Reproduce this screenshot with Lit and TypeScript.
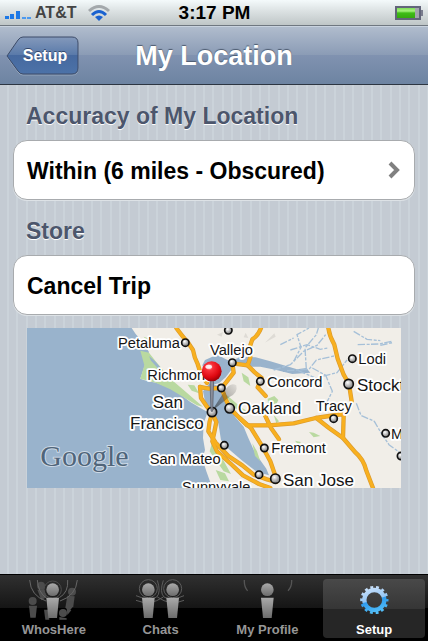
import { LitElement, css, html, svg } from "lit";
import { customElement, property, state } from "lit/decorators.js";
import { classMap } from "lit/directives/class-map.js";

type Place = { name: string; x: number; y: number; big?: boolean; dot?: [number, number] };

// Map units: three per screen pixel.
const PLACES: Place[] = [
  { name: "Petaluma", x: 273, y: 59, dot: [475, 44] },
  { name: "Vallejo", x: 549, y: 80, dot: [616, 104] },
  { name: "Richmond", x: 361, y: 155, dot: [583, 180] },
  { name: "San", x: 377, y: 241, big: true, dot: [555, 252] },
  { name: "Francisco", x: 309, y: 303, big: true },
  { name: "San Mateo", x: 368, y: 407, dot: [592, 352] },
  { name: "Sunnyvale", x: 465, y: 493, dot: [696, 440] },
  { name: "Oakland", x: 633, y: 258, big: true, dot: [608, 241] },
  { name: "Concord", x: 720, y: 176, dot: [700, 160] },
  { name: "Fremont", x: 733, y: 376, dot: [712, 360] },
  { name: "San Jose", x: 768, y: 474, big: true, dot: [745, 452] },
  { name: "Lodi", x: 994, y: 108, dot: [976, 92] },
  { name: "Stockton", x: 990, y: 189, big: true, dot: [965, 168] },
  { name: "Tracy", x: 866, y: 248, dot: [920, 272] },
  { name: "Modesto", x: 1092, y: 332, dot: [1076, 316] },
];

const ROADS = [
  "M448 0 Q470 30 482 42 L498 66 Q502 90 512 108 L522 140 L540 165",
  "M702 0 Q694 22 676 34 Q664 60 670 88 L662 112 L616 106",
  "M660 110 L684 134 L704 150 L692 178 L716 204",
  "M616 106 L620 134 Q600 160 584 180 L596 214 L610 242 L640 272 L672 300 L704 352 L730 400 L748 452",
  "M519 177 L546 182 L584 180",
  "M519 177 L522 210 L540 236 L556 256 L548 280 L544 310 L566 344 L604 384 L646 412 L680 440 L720 454 L748 462",
  "M556 256 L568 282 L562 312 L556 340 L570 370 L612 408 L648 442 L696 468 L730 480",
  "M640 272 L660 292 L726 292 L800 286 L866 270 L948 258 L950 262 L948 330",
  "M714 262 L732 300 L756 334",
  "M868 270 L906 300 L948 330 L984 372 Q1010 394 1018 428 L1038 480",
  "M904 0 Q908 26 922 50 L932 92 L950 140 L966 168 L974 220",
];

const SLOUGHS = [
  "M740 126 L790 110 L830 70 L870 52 L896 20",
  "M780 128 L846 124 L868 96 L930 82",
  "M800 100 L822 58 L810 20 L846 0",
  "M838 124 L834 60 L868 20 L874 0",
  "M856 120 L896 142 L916 190 L900 222",
  "M814 128 L866 150 L930 134 L960 96",
  "M992 50 L1056 48 L1094 40 M1060 52 L1096 44",
  "M760 50 L800 30 M790 66 L840 50 L880 64 L904 60",
  "M988 226 L1002 262 L1042 280 L1064 318 L1086 350 L1116 372",
  "M980 10 L1020 34 L1060 38",
];

@customElement("location-map")
export class LocationMap extends LitElement {
  static styles = css`
    :host { display: block; font-weight: normal; }
    .map { display: block; width: 100%; height: auto; }
    .label, .label-big {
      font-family: "Liberation Sans", Arial, sans-serif;
      fill: #151515; stroke: #fff; stroke-width: 11; stroke-linejoin: round; paint-order: stroke;
    }
    .label { font-size: 44px; }
    .label-big { font-size: 51px; }
    .logo {
      font-family: "Liberation Serif", "Times New Roman", serif; font-size: 90px;
      fill: #50657a; stroke: #ccd9e6; stroke-width: 6; paint-order: stroke;
    }
    .road-edge, .road { fill: none; stroke-linejoin: round; stroke-linecap: round; }
    .road-edge { stroke: #dc9b2e; stroke-width: 13; }
    .road { stroke: #f8b01f; stroke-width: 9; }
    .slough { fill: none; stroke: #a6c0d8; stroke-width: 4; stroke-dasharray: 22 5 9 4; }
    .water { fill: #99b3cc; }
    .park { fill: #b9d9a0; }
  `;

  render() {
    return html`
      <svg class="map" viewBox="0 0 1122 480" role="img" aria-label="Map of the San Francisco Bay Area">
        <defs>
          <radialGradient id="town" cx=".4" cy=".35"><stop offset="0" stop-color="#fff" /><stop offset="1" stop-color="#999" /></radialGradient>
          <radialGradient id="pin" cx=".38" cy=".28" r=".75">
            <stop offset="0" stop-color="#ffc4c4" /><stop offset=".25" stop-color="#f83038" />
            <stop offset=".7" stop-color="#dd0710" /><stop offset="1" stop-color="#960006" />
          </radialGradient>
          <linearGradient id="shade" x1="0" y1="1" x2="1" y2="0"><stop offset="0" stop-color="#222" stop-opacity=".6" /><stop offset="1" stop-color="#222" stop-opacity=".08" /></linearGradient>
        </defs>
        <rect width="1122" height="480" fill="#f1eee8" />
        <path class="water" d="M0 0 H314 L326 18 L344 38 L366 72 L354 110 L340 152 L362 160 L388 164 L420 176 L456 196 L490 222 L520 240 L542 252 L530 286 L528 330 L534 366 L526 392 L538 430 L556 480 H0 Z" />
        <path class="park" d="M340 68 L366 74 L386 100 L410 128 L430 152 L470 186 L500 212 L528 236 L510 232 L470 208 L430 184 L386 164 L340 152 L352 112 Z" />
        <path class="water" d="M366 84 L384 100 L402 120 L392 120 L372 98 Z M534 96 L570 80 L606 98 L620 116 L596 148 L576 166 L556 170 L540 142 L526 112 Z M548 166 L586 178 L600 220 L624 266 L650 296 L664 330 L684 374 L718 422 L726 442 L690 432 L646 398 L604 362 L582 336 L574 286 L556 258 L536 230 L528 190 Z" />
        <path class="water" d="M616 98 L640 86 L686 88 L730 100 L770 112 L810 124 L838 120 L850 134 L796 138 L748 126 L700 116 L660 116 Z M754 118 L778 114 L790 126 L768 132 Z" />
        <path class="park" d="M350 26 L372 34 L364 44 Z M592 196 L614 214 L640 236 L668 254 L650 254 L618 236 Z M722 212 L742 204 L754 216 L740 246 L724 240 Z M846 312 L860 314 L880 324 L860 328 Z M804 338 L822 342 L814 350 Z M644 134 L664 148 L670 174 L650 160 Z M556 340 L572 370 L592 402 L612 438 L590 430 L566 396 L548 370 Z M566 426 L594 436 L606 460 L580 456 Z M676 346 L690 370 L700 400 L684 384 Z M740 260 L756 280 L748 286 Z M482 170 L502 172 L516 196 L494 188 Z" />
        <path d="M714 44 L742 16 L746 26 L724 38 Z M570 20 L588 12 L584 26 Z M656 14 L664 30 L650 28 Z" fill="#dedbd5" />
        ${SLOUGHS.map((d) => svg`<path class="slough" d=${d} />`)}
        ${ROADS.map((d) => svg`<path class="road-edge" d=${d} />`)}
        ${ROADS.map((d) => svg`<path class="road" d=${d} />`)}
        ${PLACES.map((p) => svg`<text class=${p.big ? "label-big" : "label"} x=${p.x} y=${p.y}>${p.name}</text>`)}
        ${PLACES.map((p) => (p.dot ? this.town(p.dot, !!p.big) : null))}
        ${this.town([604, 7], false)}
        ${this.town([1122, 384], false)}
        <text class="logo" x="40" y="414">Google</text>
        <path d="M554 250 L592 190 Q610 160 628 172 Q634 196 606 208 Z" fill="url(#shade)" />
        <path d="M549 156 H560 L557 250 H552 Z" fill="#8b8f9b" stroke="#4f535e" stroke-width="2" />
        <circle cx="554" cy="130" r="30" fill="url(#pin)" />
        <ellipse cx="545" cy="116" rx="10" ry="6" fill="#fff" opacity=".85" />
      </svg>
    `;
  }

  private town([x, y]: [number, number], big: boolean) {
    return svg`<circle cx=${x} cy=${y} r=${big ? 14 : 11} fill="url(#town)" stroke="#111" stroke-width="5" />`;
  }
}

const PERSON = svg`<circle cx="0" cy="0" r="19" /><path d="M-19 24 H19 L13 85 H-13 Z" />`;

const ICONS = {
  whosHere: svg`
    <g fill="#4c4c4c">
      <circle cx="98" cy="124" r="12" /><path d="M87 138 H111 L107 174 H91 Z" />
      <circle cx="123" cy="78" r="12" /><path d="M112 90 L132 88 L140 112 L124 122 Z" />
      <circle cx="216" cy="96" r="12" /><path d="M202 108 L224 110 L220 140 L208 154 L196 144 Z" />
      <circle cx="189" cy="160" r="12" /><path d="M178 172 L200 176 V180 H178 Z M200 146 L214 152 L202 166 Z" />
      <path d="M132 150 H146 L148 180 H136 Z" />
    </g>
    <g fill="none" stroke="#666" stroke-width="3">
      <path d="M89 61 Q92 108 138 124 M112 61 Q114 98 140 116 M232 61 Q228 108 180 124 M203 61 Q206 98 178 114" />
      <circle cx="158" cy="90" r="26" stroke="#4c4c4c" />
    </g>
    <g fill="url(#grey)" transform="translate(158 90)">${PERSON}</g>`,
  chats: svg`
    <g fill="none" stroke="#5c5c5c" stroke-width="3">
      <circle cx="445" cy="87" r="27" /><circle cx="518" cy="87" r="27" />
      <path d="M472 62 Q484 98 470 112 Q450 126 408 108 M490 62 Q478 98 492 112 Q512 126 552 108 M408 122 Q450 140 490 112 M552 122 Q512 140 472 112" />
    </g>
    <g fill="url(#grey)" transform="translate(445 90)">${PERSON}</g>
    <g fill="url(#grey)" transform="translate(518 90)">${PERSON}</g>`,
  profile: svg`
    <path d="M88 61 Q87 82 98 93 M230 61 Q231 82 219 93" fill="none" stroke="#555" stroke-width="4" />
    <g fill="url(#grey)" transform="translate(157 90)">${PERSON}</g>`,
  setup: svg`
    <g stroke="url(#blue)" fill="none">
      <circle cx="480" cy="121" r="30" stroke-width="13" />
      <circle cx="480" cy="121" r="38" stroke-width="9" pathLength="28" stroke-dasharray="1 1" stroke-dashoffset=".5" />
    </g>`,
};

@customElement("tab-button")
export class TabButton extends LitElement {
  static properties = {
    label: { type: String },
    icon: { type: String },
    left: { type: Number },
    selected: { type: Boolean },
  };
  declare label: string;
  declare icon: keyof typeof ICONS;
  declare left: number;
  declare selected: boolean;

  static styles = css`
    :host { display: block; flex: 1; min-width: 0; }
    .tab {
      display: flex; flex-direction: column; align-items: center; gap: 2px;
      width: 100%; padding: 0; border: 0; border-radius: 4px; background: none;
      color: #969696; font: bold 13px/16px "Liberation Sans", Arial, sans-serif;
      white-space: nowrap; cursor: pointer;
    }
    .selected { color: #fff; background: linear-gradient(#494949, #363636 50%, #262626 50%, #262626); }
    .icon { display: block; width: 51px; height: 41px; }
  `;

  render() {
    return html`
      <button class=${classMap({ tab: true, selected: this.selected })} aria-pressed=${this.selected ? "true" : "false"}>
        <svg class="icon" viewBox="${this.left} 58 153 123" aria-hidden="true">
          <defs>
            <linearGradient id="grey" x1="0" y1="0" x2="0" y2="1"><stop offset="0" stop-color="#aaa" /><stop offset="1" stop-color="#6c6c6c" /></linearGradient>
            <linearGradient id="blue" gradientUnits="userSpaceOnUse" x1="465" y1="78" x2="490" y2="164">
              <stop offset="0" stop-color="#cfe4fb" /><stop offset=".48" stop-color="#95c6f5" />
              <stop offset=".52" stop-color="#2f9bee" /><stop offset="1" stop-color="#58c4fa" />
            </linearGradient>
          </defs>
          ${ICONS[this.icon]}
        </svg>
        <span>${this.label}</span>
      </button>
    `;
  }
}

const TABS = [
  { label: "WhosHere", icon: "whosHere", left: 84 },
  { label: "Chats", icon: "chats", left: 405 },
  { label: "My Profile", icon: "profile", left: 81 },
  { label: "Setup", icon: "setup", left: 404 },
];

@customElement("app-root")
export class AppRoot extends LitElement {
  @property() carrier = "AT&T";
  @state() private current = "Setup";

  static styles = css`
    :host {
      display: flex; flex-direction: column; min-height: 100vh;
      font-family: "Liberation Sans", Arial, sans-serif; font-weight: bold; color: #000;
    }
    .status {
      display: grid; grid-template-columns: 1fr auto 1fr; align-items: center;
      height: 26px; padding: 0 4px 0 5px; border-bottom: 1px solid #6f7780; box-sizing: border-box;
      background: linear-gradient(#f4fafb, #dbe1e2 45%, #bfc6c7);
    }
    .network { display: flex; align-items: center; gap: 4px; color: #444; font-size: 16px; }
    .clock { font-size: 19px; line-height: 24px; }
    .battery { justify-self: end; display: block; }
    .icon { display: block; }
    .titlebar {
      display: grid; grid-template-columns: 1fr auto 1fr; align-items: center;
      height: 59px; padding: 0 6px; box-sizing: border-box;
      border-top: 1px solid #c9d3df; border-bottom: 1px solid #2d3642;
      background: linear-gradient(#b0bccd, #8a9bb5 50%, #8092b0 50%, #6d84a2);
    }
    .back { position: relative; justify-self: start; width: 73px; height: 40px; padding: 0 0 0 5px; border: 0; background: none; cursor: pointer; }
    .back-shape { position: absolute; inset: 0; }
    .back-label { position: relative; color: #fff; font: bold 16px/20px "Liberation Sans", Arial, sans-serif; text-shadow: 0 -1px #33476b; }
    .title { margin: 0; font-size: 27px; line-height: 32px; color: #fff; text-shadow: 0 -1px 1px #4d5b70; }
    .content {
      flex: 1; padding: 0 13px 24px;
      background: repeating-linear-gradient(90deg, #c4cbd3 0 7px, #cbd3da 7px 9px, #c4cbd3 9px 16px, #cbd3da 16px 18px, #c4cbd3 18px 26px, #cbd3da 26px 28px);
    }
    .heading { margin: 19px 13px 12px; font-size: 23px; line-height: 24px; color: #4c566c; text-shadow: 0 1px #fff; }
    .cell {
      display: flex; align-items: center; justify-content: space-between;
      width: 100%; height: 60px; padding: 2px 13px 0; box-sizing: border-box;
      border: 1px solid #a8abae; border-radius: 14px; background: #fff; box-shadow: 0 1px #dde2e6;
      color: #000; font: bold 23px/28px "Liberation Sans", Arial, sans-serif; text-align: left; cursor: pointer;
    }
    .map { margin: 13px 14px 0; }
    .tabs {
      display: flex; gap: 5px; padding: 4px 3px 3px; border-top: 1px solid #000;
      background: linear-gradient(#303030, #151515 33px, #000 33px);
    }
  `;

  render() {
    return html`
      <header class="status">
        <div class="network">
          <svg class="icon" width="26" height="14" viewBox="0 0 26 14" role="img" aria-label="Signal">
            <g fill="#1c78e6"><rect y="10" width="4" height="3" /><rect x="5" y="8" width="4" height="5" /><rect x="11" y="5" width="4" height="8" /></g>
            <g fill="#4c9af0"><rect x="17" y="11" width="4" height="2" /><rect x="22" y="11" width="4" height="2" /></g>
          </svg>
          <span>${this.carrier}</span>
          <svg class="icon" width="38" height="18" viewBox="-4 0 38 18" role="img" aria-label="Wi-Fi">
            <path d="M5 7 Q15 -2 25 7" fill="none" stroke="#a3a8ab" stroke-width="3" />
            <path d="M8 11 Q15 4 22 11" fill="none" stroke="#1a62d0" stroke-width="3" />
            <path d="M11 13 Q15 10 19 13 L15 17 Z" fill="#1a62d0" />
          </svg>
        </div>
        <time class="clock">3:17 PM</time>
        <svg class="battery" width="29" height="14" viewBox="0 0 29 14" role="img" aria-label="Battery">
          <defs><linearGradient id="charge" x1="0" y1="0" x2="0" y2="1"><stop offset="0" stop-color="#7fdc58" /><stop offset=".3" stop-color="#a6f47c" /><stop offset=".5" stop-color="#3fbd17" /><stop offset="1" stop-color="#35a80f" /></linearGradient></defs>
          <rect x="1" y="1" width="24" height="12" fill="#a3a5ad" stroke="#62657a" stroke-width="2" />
          <rect x="2" y="2" width="18" height="10" fill="url(#charge)" />
          <path d="M26 4 H28 V10 H26 Z" fill="#7a7d8e" />
        </svg>
      </header>
      <header class="titlebar">
        <button class="back">
          <svg class="back-shape" width="73" height="40" viewBox="0 0 73 40" aria-hidden="true">
            <defs><linearGradient id="back" x1="0" y1="0" x2="0" y2="1"><stop offset="0" stop-color="#8499bb" /><stop offset=".5" stop-color="#5879a9" /><stop offset=".5" stop-color="#46699f" /><stop offset="1" stop-color="#4c72a8" /></linearGradient></defs>
            <path d="M17 2 H66 Q72 2 72 8 V33 Q72 39 66 39 H17 Q14 39 12 36 L1 21 L12 5 Q14 2 17 2 Z" fill="none" stroke="#a9b7ca" opacity=".6" />
            <path d="M17 1 H66 Q72 1 72 7 V32 Q72 38 66 38 H17 Q14 38 12 35 L1 20 L12 4 Q14 1 17 1 Z" fill="url(#back)" stroke="#3c4b68" stroke-width="1" />
          </svg>
          <span class="back-label">Setup</span>
        </button>
        <h1 class="title">My Location</h1>
      </header>
      <main class="content">
        <h2 class="heading">Accuracy of My Location</h2>
        <button class="cell">
          <span>Within (6 miles - Obscured)</span>
          <svg class="icon" width="14" height="20" viewBox="0 0 14 20" aria-hidden="true">
            <path d="M3 2 L10 9 L3 16" fill="none" stroke="#808080" stroke-width="4" />
          </svg>
        </button>
        <h2 class="heading">Store</h2>
        <button class="cell"><span>Cancel Trip</span></button>
        <location-map class="map"></location-map>
      </main>
      <nav class="tabs" aria-label="Sections">
        ${TABS.map(
          (t) => html`<tab-button
            .label=${t.label} .icon=${t.icon} .left=${t.left} .selected=${t.label === this.current}
            @click=${() => (this.current = t.label)}
          ></tab-button>`,
        )}
      </nav>
    `;
  }
}
